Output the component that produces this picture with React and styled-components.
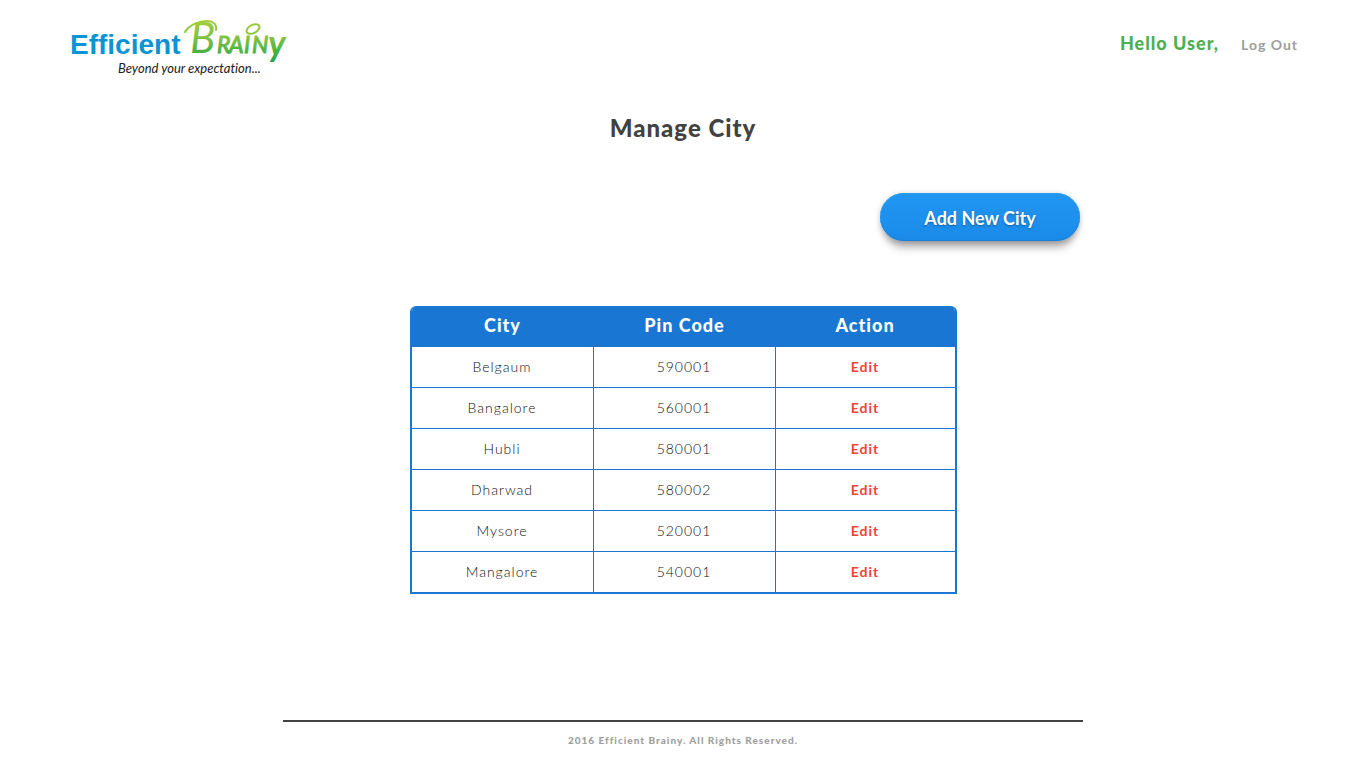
import React from "react";
import styled, { createGlobalStyle } from "styled-components";

const GlobalStyle = createGlobalStyle`
  *, *::before, *::after { box-sizing: border-box; }
  body {
    margin: 0;
    background: #fff;
    color: #424242;
    font-family: Lato, "Liberation Sans", sans-serif;
    letter-spacing: 1px;
  }
`;

const heavy = `
  font-family: "Lato Black", "Lato Heavy", Lato, "Liberation Sans", sans-serif;
  font-weight: 900;
`;

const Page = styled.div`
  min-height: 100vh;
  display: flex;
  flex-direction: column;
`;

const Header = styled.header`
  display: flex;
  justify-content: space-between;
  align-items: flex-start;
  padding: 16px 68px 0;
`;

const HomeLink = styled.a`
  display: block;
  line-height: 0;
`;

const LogoArt = styled.svg`
  width: 222px;
  height: 64px;
  overflow: visible;
  letter-spacing: 0;
  font-variant-ligatures: none;
`;

const UserNav = styled.nav`
  display: flex;
  align-items: baseline;
  gap: 22px;
  padding-top: 15px;
`;

const Greeting = styled.span`
  ${heavy}
  color: #4caf50;
  font-size: 18px;
  line-height: 24px;
`;

const LogOut = styled.a`
  color: #9e9e9e;
  font-size: 14px;
  font-weight: 700;
  text-decoration: none;
`;

const Main = styled.main`
  flex: 1;
  width: 100%;
  max-width: 794px;
  margin: 0 auto;
  display: flex;
  flex-direction: column;
`;

const Title = styled.h1`
  ${heavy}
  margin: 32px 0 0;
  font-size: 24px;
  line-height: 32px;
  text-align: center;
`;

const AddButton = styled.button`
  align-self: flex-end;
  width: 200px;
  height: 48px;
  margin-top: 49px;
  padding: 2px 0 0;
  border: 0;
  border-radius: 24px;
  background: linear-gradient(#2196f3, #1a8ae8);
  box-shadow: 0 10px 8px -4px rgba(0, 0, 0, 0.32), 0 1px 6px rgba(0, 0, 0, 0.2),
    inset 0 1px 0 #29a0e8, inset 0 -1px 0 #187fd6;
  color: #fff;
  font: 700 18px/24px Lato, "Liberation Sans", sans-serif;
  text-shadow: 0 1px 2px rgba(0, 0, 0, 0.35);
  cursor: pointer;
`;

const CityTable = styled.table`
  width: 547px;
  max-width: 100%;
  margin: 65px auto 48px;
  table-layout: fixed;
  border: 2px solid #1976d2;
  border-top: 0;
  border-radius: 6px 6px 0 0;
  border-spacing: 0;
  overflow: hidden;
  text-align: center;
`;

const DataColumn = styled.col`
  width: 182px;
`;

const HeadCell = styled.th`
  ${heavy}
  height: 41px;
  padding: 0 0 3px;
  background: #1976d2;
  color: #fff;
  font-size: 18px;
  line-height: 24px;
`;

const Cell = styled.td`
  height: 41px;
  padding: 0;
  border-bottom: 1px solid #1976d2;
  border-right: 1px solid #1976d2;
  color: #111;
  font-size: 14px;
  line-height: 20px;
  font-weight: 300;

  &:last-child { border-right: 0; }
  tr:last-child > & { height: 40px; border-bottom: 0; }
`;

const EditLink = styled.a`
  color: #f44336;
  font-weight: 700;
  text-decoration: none;
`;

const Footer = styled.footer`
  ${heavy}
  width: 100%;
  max-width: 800px;
  margin: 0 auto;
  padding: 10px 0 20px;
  border-top: 2px solid #424242;
  color: #9e9e9e;
  font-size: 10px;
  line-height: 16px;
  text-align: center;
`;

const cities = [
  ["Belgaum", "590001"],
  ["Bangalore", "560001"],
  ["Hubli", "580001"],
  ["Dharwad", "580002"],
  ["Mysore", "520001"],
  ["Mangalore", "540001"],
];

function Logo() {
  return (
    <LogoArt viewBox="0 0 222 64" role="img" aria-label="Efficient Brainy">
      <defs>
        <linearGradient id="leaf" gradientUnits="userSpaceOnUse" x1="0" y1="4" x2="0" y2="46">
          <stop offset="0" stopColor="#a6ce39" />
          <stop offset="0.45" stopColor="#7cc142" />
          <stop offset="1" stopColor="#1fa546" />
        </linearGradient>
      </defs>
      <text x="2" y="38" fontFamily="Liberation Sans" fontWeight="700" fontSize="28" fill="#0a94d6">Efficient</text>
      <g fill="url(#leaf)" fontFamily="Lato" fontStyle="italic">
        <text x="122" y="37" fontSize="42" fontWeight="400">B</text>
        <text x="149 161 176 184" y="37" fontSize="23" fontWeight="400" stroke="url(#leaf)">RAIN</text>
        <text x="200" y="40" fontSize="36" fontWeight="700">y</text>
      </g>
      <g fill="none" stroke="url(#leaf)" strokeLinecap="round">
        <path d="M117 16c4-7 14-11 22-11 7 0 10 4 9 9" strokeWidth="2" />
        <ellipse cx="185" cy="13" rx="7" ry="4" transform="rotate(-28 185 13)" strokeWidth="2" />
      </g>
      <text x="50" y="57" fontFamily="Lato" fontStyle="italic" fontSize="13" fill="#222">Beyond your expectation...</text>
    </LogoArt>
  );
}

export default function App() {
  return (
    <>
      <GlobalStyle />
      <Page>
        <Header>
          <HomeLink href="#home"><Logo /></HomeLink>
          <UserNav>
            <Greeting>Hello User,</Greeting>
            <LogOut href="#logout">Log Out</LogOut>
          </UserNav>
        </Header>
        <Main>
          <Title>Manage City</Title>
          <AddButton type="button">Add New City</AddButton>
          <CityTable>
            <colgroup>
              <DataColumn />
              <DataColumn />
              <col />
            </colgroup>
            <thead>
              <tr>
                <HeadCell scope="col">City</HeadCell>
                <HeadCell scope="col">Pin Code</HeadCell>
                <HeadCell scope="col">Action</HeadCell>
              </tr>
            </thead>
            <tbody>
              {cities.map(([city, pin]) => (
                <tr key={city}>
                  <Cell>{city}</Cell>
                  <Cell>{pin}</Cell>
                  <Cell><EditLink href="#edit" aria-label={`Edit ${city}`}>Edit</EditLink></Cell>
                </tr>
              ))}
            </tbody>
          </CityTable>
        </Main>
        <Footer>2016 Efficient Brainy. All Rights Reserved.</Footer>
      </Page>
    </>
  );
}
